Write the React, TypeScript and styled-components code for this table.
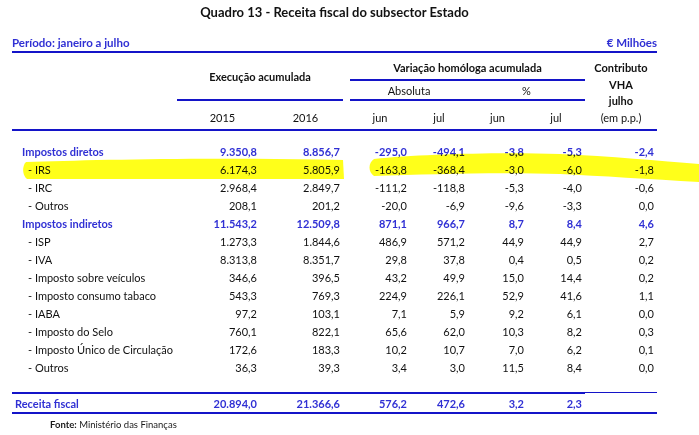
import styled, { createGlobalStyle } from 'styled-components';

const GlobalStyle = createGlobalStyle`
  html, body {
    margin: 0;
    padding: 0;
    background: #ffffff;
  }
  body {
    font-family: 'Lato', 'Open Sans', sans-serif;
    color: #111;
  }
`;

const BLUE_TEXT = '#3030d4';
const BLUE_LINE = '#1414c8';
const COLS = '165px 83px 83px 7px 60px 58px 59px 58px 72px';

const Page = styled.div`
  position: relative;
  width: 699px;
  height: 435px;
  overflow: hidden;
`;

const Sheet = styled.div`
  position: relative;
  z-index: 1;
  width: 645px;
  padding-left: 12px;
`;

const Title = styled.h1`
  margin: 0;
  height: 24px;
  line-height: 24px;
  text-align: center;
  font-size: 13px;
  font-weight: 700;
  color: #111;
`;

const PeriodBar = styled.div`
  display: flex;
  justify-content: space-between;
  align-items: flex-end;
  height: 29px;
  box-sizing: border-box;
  border-bottom: 2px solid ${BLUE_LINE};
  color: ${BLUE_TEXT};
  font-size: 11.5px;
  font-weight: 700;
  line-height: 14px;
  padding-bottom: 1px;
`;

const Header = styled.div`
  display: grid;
  grid-template-columns: ${COLS};
  grid-template-rows: 28px 20px 28px;
  border-bottom: 2px solid ${BLUE_LINE};
  font-size: 11px;
`;

const HeadCell = styled.div<{ $col: string; $row: string; $line?: boolean; $pt?: number; $bold?: boolean }>`
  grid-column: ${({ $col }) => $col};
  grid-row: ${({ $row }) => $row};
  display: flex;
  align-items: center;
  justify-content: center;
  box-sizing: border-box;
  padding-top: ${({ $pt }) => $pt ?? 0}px;
  border-bottom: ${({ $line }) => ($line ? `2px solid ${BLUE_LINE}` : 'none')};
  font-weight: ${({ $bold }) => ($bold ? 700 : 400)};
`;

const YearCell = styled(HeadCell)`
  padding-left: 8px;
`;

const Contributo = styled.div`
  grid-column: 9;
  grid-row: 1 / 4;
  display: flex;
  flex-direction: column;
  align-items: center;
  justify-content: center;
  padding-top: 4px;
  line-height: 16.5px;
  font-weight: 700;

  span:last-child {
    font-weight: 400;
  }
`;

const Body = styled.div`
  padding-top: 11px;
`;

const Row = styled.div<{ $group?: boolean }>`
  display: grid;
  grid-template-columns: ${COLS};
  height: 18px;
  align-items: center;
  font-size: 11px;
  color: ${({ $group }) => ($group ? BLUE_TEXT : '#111')};
  font-weight: ${({ $group }) => ($group ? 700 : 400)};
`;

const Label = styled.div<{ $indent: number }>`
  padding-left: ${({ $indent }) => $indent}px;
  white-space: nowrap;
`;

const Num = styled.div`
  text-align: right;
  padding-right: 3px;
`;

const TotalRow = styled.div`
  display: grid;
  grid-template-columns: ${COLS};
  margin-top: 16px;
  height: 22px;
  font-size: 11px;
  font-weight: 700;
  color: ${BLUE_TEXT};
`;

const TotalCell = styled.div<{ $thin?: boolean; $left?: boolean }>`
  display: flex;
  align-items: center;
  justify-content: ${({ $left }) => ($left ? 'flex-start' : 'flex-end')};
  box-sizing: border-box;
  padding: 0 3px;
  border-top: ${({ $thin }) => ($thin ? 1 : 2)}px solid ${BLUE_LINE};
  border-bottom: 2px solid ${BLUE_LINE};
`;

const Source = styled.div`
  padding-left: 38px;
  line-height: 22px;
  font-size: 9.5px;
  color: #1a1a1a;

  b {
    font-weight: 700;
  }
`;

const Highlight = styled.svg`
  position: absolute;
  left: 0;
  top: 0;
  width: 699px;
  height: 435px;
  z-index: 2;
  mix-blend-mode: multiply;
  pointer-events: none;
`;

type Line = { label: string; group?: boolean; values: string[] };

const rows: Line[] = [
  { label: 'Impostos diretos', group: true, values: ['9.350,8', '8.856,7', '-295,0', '-494,1', '-3,8', '-5,3', '-2,4'] },
  { label: '- IRS', values: ['6.174,3', '5.805,9', '-163,8', '-368,4', '-3,0', '-6,0', '-1,8'] },
  { label: '- IRC', values: ['2.968,4', '2.849,7', '-111,2', '-118,8', '-5,3', '-4,0', '-0,6'] },
  { label: '- Outros', values: ['208,1', '201,2', '-20,0', '-6,9', '-9,6', '-3,3', '0,0'] },
  { label: 'Impostos indiretos', group: true, values: ['11.543,2', '12.509,8', '871,1', '966,7', '8,7', '8,4', '4,6'] },
  { label: '- ISP', values: ['1.273,3', '1.844,6', '486,9', '571,2', '44,9', '44,9', '2,7'] },
  { label: '- IVA', values: ['8.313,8', '8.351,7', '29,8', '37,8', '0,4', '0,5', '0,2'] },
  { label: '- Imposto sobre veículos', values: ['346,6', '396,5', '43,2', '49,9', '15,0', '14,4', '0,2'] },
  { label: '- Imposto consumo tabaco', values: ['543,3', '769,3', '224,9', '226,1', '52,9', '41,6', '1,1'] },
  { label: '- IABA', values: ['97,2', '103,1', '7,1', '5,9', '9,2', '6,1', '0,0'] },
  { label: '- Imposto do Selo', values: ['760,1', '822,1', '65,6', '62,0', '10,3', '8,2', '0,3'] },
  { label: '- Imposto Único de Circulação', values: ['172,6', '183,3', '10,2', '10,7', '7,0', '6,2', '0,1'] },
  { label: '- Outros', values: ['36,3', '39,3', '3,4', '3,0', '11,5', '8,4', '0,0'] },
];

const total = ['20.894,0', '21.366,6', '576,2', '472,6', '3,2', '2,3', ''];

const DataRow = ({ line }: { line: Line }) => (
  <Row $group={line.group}>
    <Label $indent={line.group ? 10 : 16}>{line.label}</Label>
    <Num>{line.values[0]}</Num>
    <Num>{line.values[1]}</Num>
    <div />
    {line.values.slice(2).map((v, i) => (
      <Num key={i}>{v}</Num>
    ))}
  </Row>
);

export default function App() {
  return (
    <Page>
      <GlobalStyle />
      <Sheet>
        <Title>Quadro 13 - Receita fiscal do subsector Estado</Title>
        <PeriodBar>
          <span>Período: janeiro a julho</span>
          <span>€ Milhões</span>
        </PeriodBar>
        <Header>
          <HeadCell $col="2 / 4" $row="1 / 3" $line $bold>Execução acumulada</HeadCell>
          <HeadCell $col="5 / 9" $row="1" $line $pt={3} $bold>Variação homóloga acumulada</HeadCell>
          <HeadCell $col="5 / 7" $row="2" $line>Absoluta</HeadCell>
          <HeadCell $col="7 / 9" $row="2" $line>%</HeadCell>
          <Contributo>
            <span>Contributo</span>
            <span>VHA</span>
            <span>julho</span>
            <span>(em p.p.)</span>
          </Contributo>
          <YearCell $col="2" $row="3" $pt={5}>2015</YearCell>
          <YearCell $col="3" $row="3" $pt={5}>2016</YearCell>
          <HeadCell $col="5" $row="3" $pt={5}>jun</HeadCell>
          <HeadCell $col="6" $row="3" $pt={5}>jul</HeadCell>
          <HeadCell $col="7" $row="3" $pt={5}>jun</HeadCell>
          <HeadCell $col="8" $row="3" $pt={5}>jul</HeadCell>
        </Header>
        <Body>
          {rows.map((line, i) => (
            <DataRow key={i} line={line} />
          ))}
        </Body>
        <TotalRow>
          <TotalCell $left>Receita fiscal</TotalCell>
          <TotalCell>{total[0]}</TotalCell>
          <TotalCell>{total[1]}</TotalCell>
          <TotalCell />
          {total.slice(2).map((v, i) => (
            <TotalCell key={i} $thin={i === 4}>{v}</TotalCell>
          ))}
        </TotalRow>
        <Source>
          <b>Fonte:</b> Ministério das Finanças
        </Source>
      </Sheet>
      <Highlight viewBox="0 0 699 435">
        <path
          d="M26 162 C 90 160, 200 157, 343 160 L 344 179 C 230 179, 120 179, 27 179 C 22 175, 22 166, 26 162 Z"
          fill="#ffff1a"
        />
        <path
          d="M374 159 C 420 154, 500 152, 560 154 C 610 156, 660 161, 699 164 L 699 182 C 650 179, 600 176, 560 174 C 500 172, 430 174, 374 176 C 368 172, 368 163, 374 159 Z"
          fill="#ffff1a"
        />
      </Highlight>
    </Page>
  );
}
